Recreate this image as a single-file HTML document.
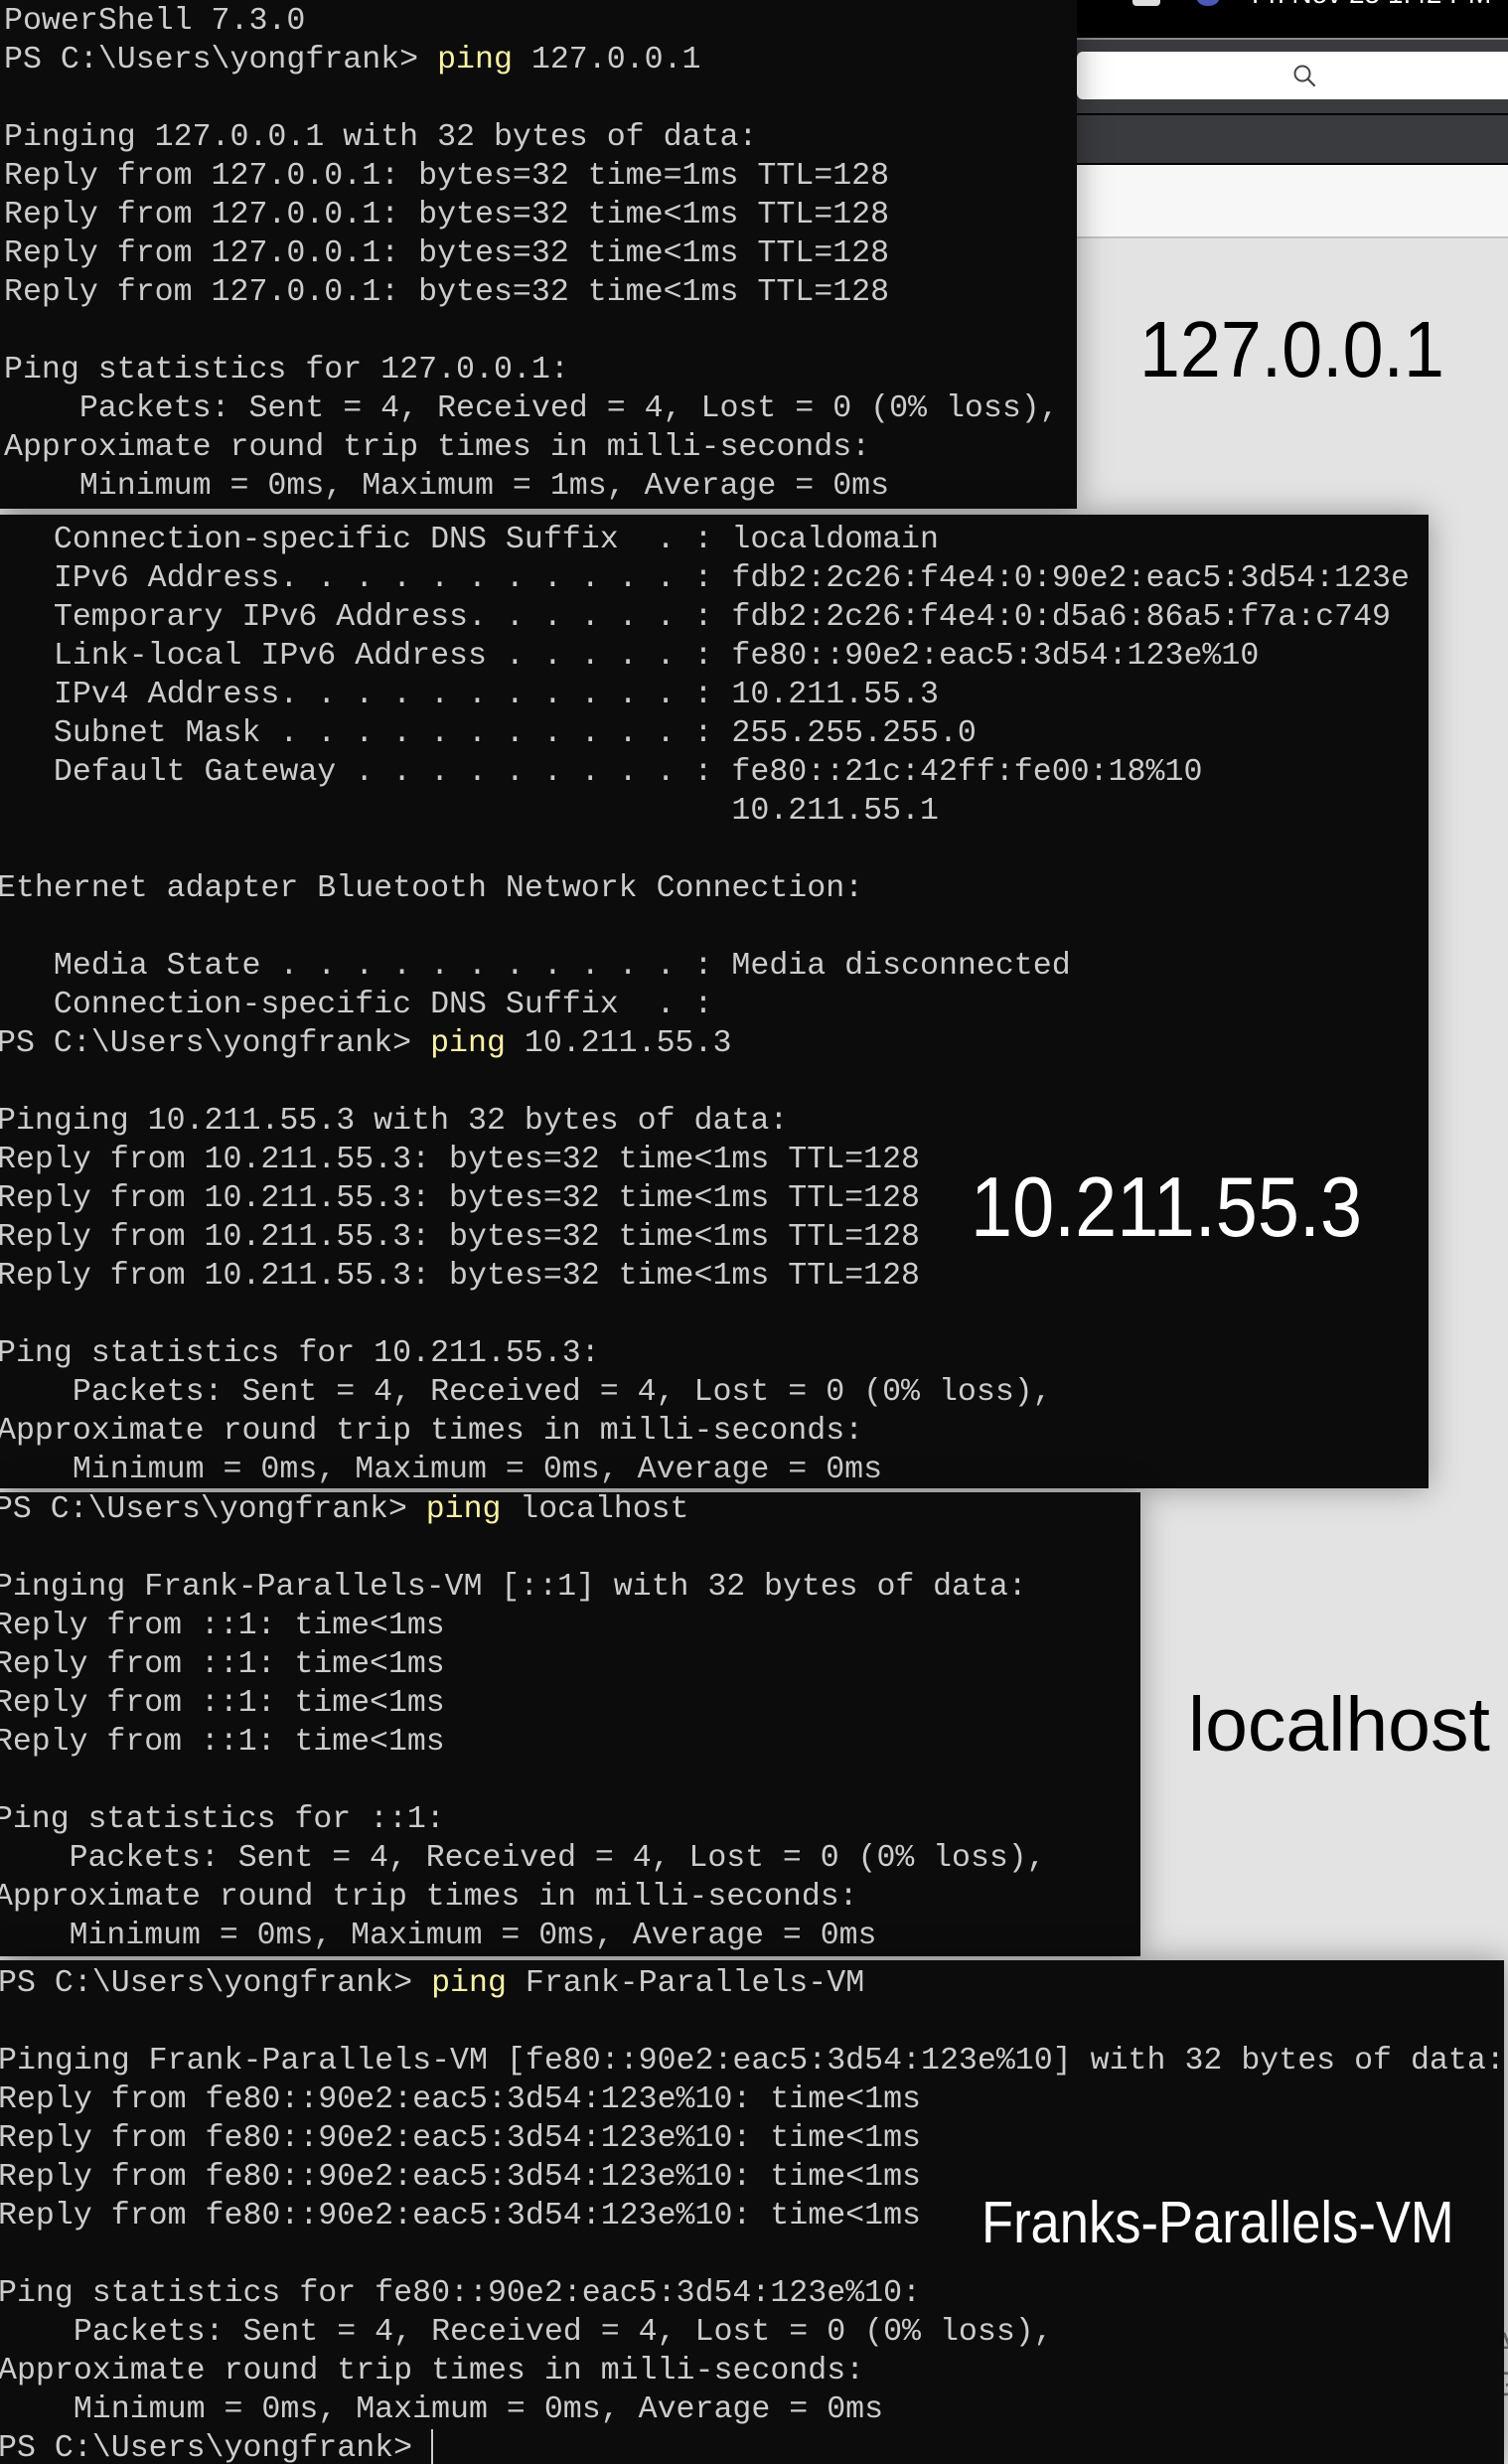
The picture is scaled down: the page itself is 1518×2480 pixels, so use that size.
<!DOCTYPE html>
<html><head><meta charset="utf-8"><style>
html,body{margin:0;padding:0}
body{width:1518px;height:2480px;position:relative;overflow:hidden;background:#e3e3e3;font-family:"Liberation Mono",monospace}
.p{position:absolute;background:#0c0c0c;overflow:hidden;box-shadow:0 0 30px rgba(0,0,0,.35)}
.p pre{position:absolute;margin:0;color:#cccccc;white-space:pre;line-height:39px}
.y{color:#f9f1a5}
.big{position:absolute;font-family:"Liberation Sans",sans-serif;white-space:nowrap;transform-origin:0 0}
</style></head><body>

<div style="position:absolute;left:1084px;top:0;width:434px;height:38px;background:#000"></div>
<div style="position:absolute;left:1140px;top:0;width:28px;height:6px;background:#ddd;border-radius:0 0 4px 4px"></div>
<div style="position:absolute;left:1205px;top:-8px;width:22px;height:14px;border-radius:50%;background:#4a58b8"></div>
<div style="position:absolute;left:1260px;top:-22px;color:#fff;font-family:'Liberation Sans',sans-serif;font-size:28px">Fri Nov 25 1:42 PM</div>
<div style="position:absolute;left:1084px;top:38px;width:434px;height:2px;background:#8a8a8c"></div>
<div style="position:absolute;left:1084px;top:40px;width:434px;height:74px;background:#3a3b3f"></div>
<div style="position:absolute;left:1084px;top:52px;width:450px;height:48px;background:#fff;border-radius:6px"></div>
<svg style="position:absolute;left:1300px;top:63px" width="26" height="26" viewBox="0 0 26 26"><circle cx="11" cy="11" r="7.5" fill="none" stroke="#444" stroke-width="2"/><path d="M16.5 16.5 L23 23" stroke="#444" stroke-width="2.2" stroke-linecap="round"/></svg>
<div style="position:absolute;left:1084px;top:114px;width:434px;height:2px;background:#000"></div>
<div style="position:absolute;left:1084px;top:116px;width:434px;height:48px;background:#3a3b3f"></div>
<div style="position:absolute;left:1084px;top:164px;width:434px;height:2px;background:#000"></div>
<div style="position:absolute;left:1084px;top:166px;width:434px;height:72px;background:#f7f7f7"></div>
<div style="position:absolute;left:1084px;top:238px;width:434px;height:2px;background:#c2c2c2"></div>

<div class="big" style="left:1147px;top:312px;font-size:80px;line-height:80px;color:#000;transform:scaleX(.92)">127.0.0.1</div>
<div class="big" style="left:1196px;top:1698px;font-size:77px;line-height:77px;color:#000">localhost</div>
<div style="position:absolute;left:1502px;top:2340px;color:#777;font-family:'Liberation Sans',sans-serif;font-size:34px;line-height:40px">A<br>G</div>

<div class="p" style="left:0;top:0;width:1084px;height:512px">
<pre style="left:4px;top:2px;font-size:31.6px">PowerShell 7.3.0
PS C:\Users\yongfrank&gt; <span class="y">ping</span> 127.0.0.1

Pinging 127.0.0.1 with 32 bytes of data:
Reply from 127.0.0.1: bytes=32 time=1ms TTL=128
Reply from 127.0.0.1: bytes=32 time&lt;1ms TTL=128
Reply from 127.0.0.1: bytes=32 time&lt;1ms TTL=128
Reply from 127.0.0.1: bytes=32 time&lt;1ms TTL=128

Ping statistics for 127.0.0.1:
    Packets: Sent = 4, Received = 4, Lost = 0 (0% loss),
Approximate round trip times in milli-seconds:
    Minimum = 0ms, Maximum = 1ms, Average = 0ms</pre>
</div>

<div class="p" style="left:0;top:518px;width:1438px;height:980px">
<pre style="left:-3px;top:6px;font-size:31.6px">   Connection-specific DNS Suffix  . : localdomain
   IPv6 Address. . . . . . . . . . . : fdb2:2c26:f4e4:0:90e2:eac5:3d54:123e
   Temporary IPv6 Address. . . . . . : fdb2:2c26:f4e4:0:d5a6:86a5:f7a:c749
   Link-local IPv6 Address . . . . . : fe80::90e2:eac5:3d54:123e%10
   IPv4 Address. . . . . . . . . . . : 10.211.55.3
   Subnet Mask . . . . . . . . . . . : 255.255.255.0
   Default Gateway . . . . . . . . . : fe80::21c:42ff:fe00:18%10
                                       10.211.55.1

Ethernet adapter Bluetooth Network Connection:

   Media State . . . . . . . . . . . : Media disconnected
   Connection-specific DNS Suffix  . :
PS C:\Users\yongfrank&gt; <span class="y">ping</span> 10.211.55.3

Pinging 10.211.55.3 with 32 bytes of data:
Reply from 10.211.55.3: bytes=32 time&lt;1ms TTL=128
Reply from 10.211.55.3: bytes=32 time&lt;1ms TTL=128
Reply from 10.211.55.3: bytes=32 time&lt;1ms TTL=128
Reply from 10.211.55.3: bytes=32 time&lt;1ms TTL=128

Ping statistics for 10.211.55.3:
    Packets: Sent = 4, Received = 4, Lost = 0 (0% loss),
Approximate round trip times in milli-seconds:
    Minimum = 0ms, Maximum = 0ms, Average = 0ms</pre>
<div class="big" style="left:977px;top:655px;font-size:85px;line-height:85px;color:#fff;transform:scaleX(.89)">10.211.55.3</div>
</div>

<div class="p" style="left:0;top:1502px;width:1148px;height:467px">
<pre style="left:-6px;top:-2px;font-size:31.5px">PS C:\Users\yongfrank&gt; <span class="y">ping</span> localhost

Pinging Frank-Parallels-VM [::1] with 32 bytes of data:
Reply from ::1: time&lt;1ms
Reply from ::1: time&lt;1ms
Reply from ::1: time&lt;1ms
Reply from ::1: time&lt;1ms

Ping statistics for ::1:
    Packets: Sent = 4, Received = 4, Lost = 0 (0% loss),
Approximate round trip times in milli-seconds:
    Minimum = 0ms, Maximum = 0ms, Average = 0ms</pre>
</div>

<div class="p" style="left:0;top:1973px;width:1514px;height:507px">
<pre style="left:-2px;top:4px;font-size:31.6px">PS C:\Users\yongfrank&gt; <span class="y">ping</span> Frank-Parallels-VM

Pinging Frank-Parallels-VM [fe80::90e2:eac5:3d54:123e%10] with 32 bytes of data:
Reply from fe80::90e2:eac5:3d54:123e%10: time&lt;1ms
Reply from fe80::90e2:eac5:3d54:123e%10: time&lt;1ms
Reply from fe80::90e2:eac5:3d54:123e%10: time&lt;1ms
Reply from fe80::90e2:eac5:3d54:123e%10: time&lt;1ms

Ping statistics for fe80::90e2:eac5:3d54:123e%10:
    Packets: Sent = 4, Received = 4, Lost = 0 (0% loss),
Approximate round trip times in milli-seconds:
    Minimum = 0ms, Maximum = 0ms, Average = 0ms
PS C:\Users\yongfrank&gt; </pre>
<div style="position:absolute;left:434px;top:472px;width:2px;height:35px;background:#ccc"></div>
<div class="big" style="left:988px;top:235px;font-size:59px;line-height:59px;color:#fff;transform:scaleX(.89)">Franks-Parallels-VM</div>
</div>

</body></html>
